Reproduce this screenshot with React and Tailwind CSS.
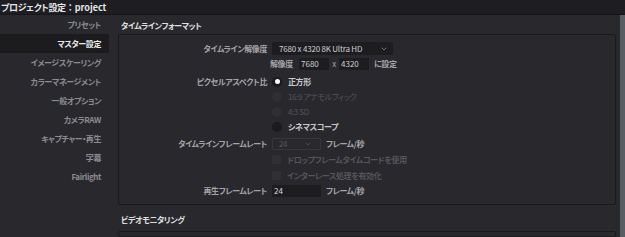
import { ChevronDown } from "lucide-react"

const menu = [
  "プリセット",
  "マスター設定",
  "イメージスケーリング",
  "カラーマネージメント",
  "一般オプション",
  "カメラRAW",
  "キャプチャー・再生",
  "字幕",
  "Fairlight",
]

function Row({ label, children, className = "" }) {
  return (
    <div className={"flex items-center h-[15px] " + className}>
      <div className="w-[153px] shrink-0 text-right pr-[5px] text-[#a4a4a8]">{label}</div>
      <div className="flex items-center">{children}</div>
    </div>
  )
}

function Radio({ checked, disabled, children }) {
  return (
    <div className="flex items-center gap-[6px]">
      <span
        className={
          "w-[10px] h-[10px] rounded-full flex items-center justify-center " +
          (disabled ? "bg-[#2f2f34]" : "bg-[#1b1b1e]")
        }
      >
        {checked && <span className="w-[5px] h-[5px] rounded-full bg-white" />}
      </span>
      <span className={disabled ? "text-[#55555a] font-normal" : "text-[#c8c8cb]"}>{children}</span>
    </div>
  )
}

function Check({ children }) {
  return (
    <div className="flex items-center gap-[6px]">
      <span className="w-[9px] h-[9px] rounded-[1px] bg-[#2f2f34]" />
      <span className="text-[#55555a]">{children}</span>
    </div>
  )
}

export default function App() {
  return (
    <div
      className="w-[625px] h-[237px] bg-[#28282d] overflow-hidden flex flex-col text-[8px] font-semibold tracking-[-0.4px] [font-feature-settings:'palt']"
      style={{ fontFamily: "'Noto Sans CJK JP', 'Noto Sans', sans-serif" }}
    >
      <div className="h-[15px] shrink-0 bg-[#1e1e22] border-b border-[#16161a] flex items-center pl-[1px] text-[9px] font-bold text-[#e6e6e8] leading-none">
        <span>プロジェクト設定</span>
        <span className="[font-feature-settings:normal] tracking-normal">：</span>
        <span className="tracking-normal">project</span>
      </div>
      <div className="flex flex-1 min-h-0">
        <div className="w-[109px] shrink-0 flex flex-col">
          {menu.map((m, i) => (
            <div
              key={m}
              className={
                "h-[19px] flex items-center justify-end pr-[8px] " +
                (i === 1 ? "bg-[#1c1c1f] text-[#e8e8ea]" : "text-[#8c8c91]")
              }
            >
              {m}
            </div>
          ))}
        </div>
        <div className="flex-1 pl-[9px] pr-[4px] pt-[2px] flex flex-col">
          <div className="h-[17px] flex items-center pl-[3px] text-[#e0e0e2] font-bold">タイムラインフォーマット</div>
          <div className="h-[171px] border border-[#1a1a1d] rounded-[2px] pt-[6px] flex flex-col">
            <Row label="タイムライン解像度">
              <div className="w-[121px] h-[13px] bg-[#1d1d20] rounded-[2px] flex items-center justify-between pl-[7px] pr-[5px] text-[#cfcfd2] font-normal tracking-[-0.2px]">
                <span>7680 x 4320 8K Ultra HD</span>
                <ChevronDown size={8} strokeWidth={2} className="text-[#a4a4a8]" />
              </div>
            </Row>
            <div className="flex items-center h-[15px] pl-[151px]">
              <span className="w-[29px] text-[#a4a4a8]">解像度</span>
              <div className="w-[30px] h-[12px] bg-[#1d1d20] rounded-[1px] pl-[2px] flex items-center text-[#cfcfd2] font-normal tracking-normal">7680</div>
              <span className="w-[10px] text-center text-[#a4a4a8] font-normal">x</span>
              <div className="w-[30px] h-[12px] bg-[#1d1d20] rounded-[1px] pl-[2px] flex items-center text-[#cfcfd2] font-normal tracking-normal">4320</div>
              <span className="ml-[5px] text-[#a4a4a8]">に設定</span>
            </div>
            <Row label="ピクセルアスペクト比" className="mt-[3px]">
              <Radio checked>正方形</Radio>
            </Row>
            <Row label="">
              <Radio disabled>16:9 アナモルフィック</Radio>
            </Row>
            <Row label="">
              <Radio disabled>4:3 SD</Radio>
            </Row>
            <Row label="">
              <Radio>シネマスコープ</Radio>
            </Row>
            <Row label="タイムラインフレームレート" className="mt-[2px]">
              <div className="w-[49px] h-[12px] border border-[#36363b] rounded-[1px] flex items-center justify-between pl-[6px] pr-[8px] text-[#5a5a5f] font-normal">
                <span>24</span>
                <ChevronDown size={8} strokeWidth={2} />
              </div>
              <span className="ml-[5px] text-[#a4a4a8]">フレーム/秒</span>
            </Row>
            <Row label="" className="mt-[1px]">
              <Check>ドロップフレームタイムコードを使用</Check>
            </Row>
            <Row label="" className="mt-[1px]">
              <Check>インターレース処理を有効化</Check>
            </Row>
            <Row label="再生フレームレート">
              <div className="w-[49px] h-[12px] bg-[#1d1d20] rounded-[1px] flex items-center px-[2px] text-[#d8d8da] font-normal tracking-normal">24</div>
              <span className="ml-[5px] text-[#a4a4a8]">フレーム/秒</span>
            </Row>
          </div>
          <div className="h-[26px] flex items-center pl-[3px] pt-[4px] text-[#e0e0e2] font-bold">ビデオモニタリング</div>
          <div className="flex-1 border border-[#1a1a1d] rounded-[2px]" />
        </div>
        <div className="w-[5px] shrink-0 bg-[#5b5d64]" />
      </div>
    </div>
  )
}
